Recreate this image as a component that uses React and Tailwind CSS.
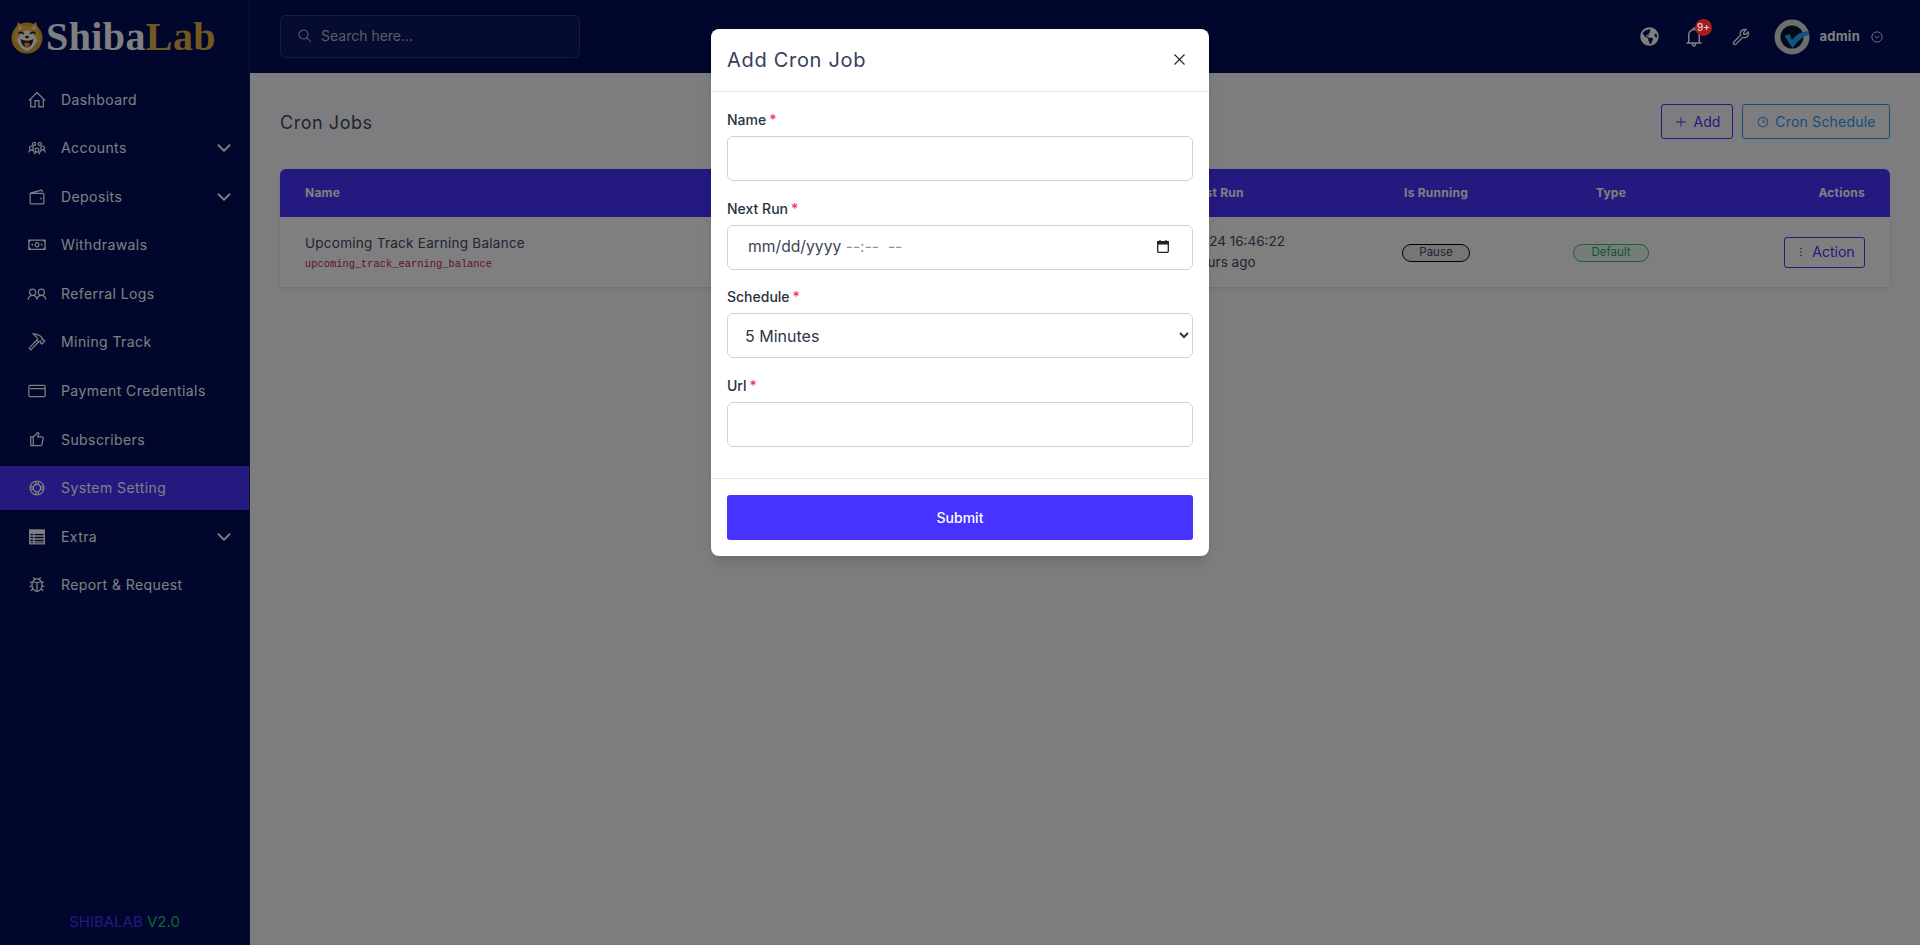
import React from 'react';
import {
  LiaHomeSolid, LiaUsersSolid, LiaWalletSolid, LiaMoneyBillSolid, LiaUserFriendsSolid, LiaHammerSolid,
  LiaCreditCard, LiaThumbsUp, LiaLifeRing, LiaBugSolid, LiaBell,
  LiaWrenchSolid, LiaSearchSolid, LiaPlusSolid, LiaClock, LiaEllipsisVSolid,
} from 'react-icons/lia';
import { FaGlobeAmericas } from 'react-icons/fa';
import { ChevronDown } from 'lucide-react';

function TableIcon({ className }) {
  return (
    <svg viewBox="0 0 16 16" width="16" height="16" fill="none" stroke="currentColor" strokeWidth="1.3" className={className}>
      <rect x="0.7" y="1.2" width="14.6" height="13.6" />
      <path d="M0.7 4 H15.3 M0.7 7 H15.3 M0.7 10 H15.3 M0.7 12.8 H15.3 M5 4 V14.8" />
      <rect x="0.7" y="1.2" width="14.6" height="2.8" fill="currentColor" />
    </svg>
  );
}

const navItems = [
  { label: 'Dashboard', icon: LiaHomeSolid },
  { label: 'Accounts', icon: LiaUsersSolid, caret: true },
  { label: 'Deposits', icon: LiaWalletSolid, caret: true },
  { label: 'Withdrawals', icon: LiaMoneyBillSolid },
  { label: 'Referral Logs', icon: LiaUserFriendsSolid },
  { label: 'Mining Track', icon: LiaHammerSolid },
  { label: 'Payment Credentials', icon: LiaCreditCard },
  { label: 'Subscribers', icon: LiaThumbsUp },
  { label: 'System Setting', icon: LiaLifeRing, active: true },
  { label: 'Extra', icon: TableIcon, caret: true },
  { label: 'Report & Request', icon: LiaBugSolid },
];

function ShibaLogo() {
  return (
    <svg width="34" height="34" viewBox="0 0 34 34" className="shrink-0">
      <circle cx="17" cy="18" r="15.5" fill="#d9a62e" />
      <path d="M5 13 L8 2 L13.5 6.5 H20.5 L26 2 L29 13 L30 21 L17 31 L4 21 Z" fill="#eeb94f" />
      <path d="M9 6 L8.6 10 L12 8 Z M25 6 L25.4 10 L22 8 Z" fill="#fff" />
      <path d="M17 10 Q24 13 27 20 Q24 29 17 31 Q10 29 7 20 Q10 13 17 10 Z" fill="#fff" />
      <path d="M8.5 13.5 Q11 11 14 14 M19.8 14 Q23 11 25.5 13.5" stroke="#2a1a10" strokeWidth="1.6" fill="none" />
      <ellipse cx="17" cy="17" rx="2" ry="1.3" fill="#2a1a10" />
      <path d="M10.5 19 Q17 22.5 23.5 19 Q22 27.5 17 27.5 Q12 27.5 10.5 19 Z" fill="#3a1a14" />
      <path d="M14 23.5 Q17 21.5 20 23.5 Q19.2 27.5 17 27.5 Q14.8 27.5 14 23.5 Z" fill="#f0913c" />
    </svg>
  );
}

function Avatar() {
  return (
    <svg width="36" height="36" viewBox="0 0 36 36" className="shrink-0">
      <circle cx="18" cy="18" r="14.5" fill="#05122e" stroke="#dcdcdc" strokeWidth="6" />
      <path d="M10.5 17 L15.5 15 L18 21 C22 16 27 12.5 35 12 L35 16 C29 17 24 22 18.5 29 Z" fill="#22a8ff" />
    </svg>
  );
}

function Field({ label, children }) {
  return (
    <div className="mb-[17.7px]">
      <label className="mb-[6px] block h-5 text-sm leading-5 font-medium text-[#2a3142]">
        {label}
        <span className="ml-[3px] text-[#f0345a]">*</span>
      </label>
      {children}
    </div>
  );
}

export default function App() {
  return (
    <div className="relative flex h-[945px] overflow-hidden bg-[#fafafe] font-['Inter',sans-serif] text-[#3d4a66]">
      <aside className="flex w-[250px] shrink-0 flex-col border-r border-white/10 bg-[#000c58]">
        <div className="flex h-[73px] items-center pl-[10px]">
          <ShibaLogo />
          <span className="ml-[2px] font-['Liberation_Serif',serif] text-[40px] leading-none font-bold tracking-[0.01em] text-white">
            Shiba<span className="text-[#e0b040]">Lab</span>
          </span>
        </div>
        <nav className="mt-1 flex flex-1 flex-col gap-[4.6px]">
          {navItems.map((item) => (
            <div
              key={item.label}
              className={`flex h-11 shrink-0 items-center pt-px pr-[14px] pl-[27px] text-sm tracking-[0.03em] text-white ${
                item.active ? 'bg-[#4733ff]' : ''
              }`}
            >
              <span className="mr-[14px] flex w-5 shrink-0 justify-center">
                <item.icon className="text-[20px]" />
              </span>
              <span className="flex-1">{item.label}</span>
              {item.caret && <ChevronDown size={22} strokeWidth={2} />}
            </div>
          ))}
        </nav>
        <div className="pb-[11px] text-center text-[15px] leading-6">
          <span className="text-[#4733ff]">SHIBALAB</span> <span className="text-[#28c76f]">V2.0</span>
        </div>
      </aside>

      <div className="flex min-w-0 flex-1 flex-col">
        <header className="flex h-[73px] shrink-0 items-center justify-between bg-[#000c58] pr-[37px] pl-[30px] text-white">
          <div className="flex h-[43px] w-[300px] items-center rounded-md border border-white/15 bg-white/5 pb-px pl-4 text-sm text-white/70">
            <LiaSearchSolid className="mr-2 -scale-x-100 text-[16px]" />
            Search here...
          </div>
          <div className="flex items-center">
            <FaGlobeAmericas className="text-[19px]" />
            <LiaBell className="ml-[23px] text-[24px]" />
            <LiaWrenchSolid className="ml-[24px] text-[22px]" />
            <span className="ml-[22px]">
              <Avatar />
            </span>
            <span className="ml-[9px] text-[13px] font-bold tracking-[0.02em]">admin</span>
            <svg width="12" height="12" viewBox="0 0 14 14" fill="none" stroke="currentColor" className="ml-[11px]">
              <circle cx="7" cy="7" r="6" />
              <path d="M4.4 5.8 L7 8.4 L9.6 5.8" />
            </svg>
          </div>
        </header>

        <main className="flex-1 px-[30px] pt-[31px]">
          <div className="flex h-[35px] items-center justify-between">
            <h1 className="pt-0.5 text-lg tracking-[0.03em]">Cron Jobs</h1>
            <div className="flex gap-[9px] text-sm">
              <button className="flex h-[35px] w-[72px] items-center justify-center rounded-[3px] border border-[#4733ff] text-[#4733ff]">
                <LiaPlusSolid className="mr-[6px] text-[14px]" />
                Add
              </button>
              <button className="flex h-[35px] w-[148px] items-center justify-center rounded-[3px] border border-[#2b9cf2] text-[#2b9cf2]">
                <LiaClock className="mr-[5px] text-[14px]" />
                <span className="tracking-[0.015em]">Cron Schedule</span>
              </button>
            </div>
          </div>

          <div className="mt-[30px] overflow-hidden rounded-t-md bg-white shadow-sm">
            <div className="grid h-12 grid-cols-[776.5px_267px_175px_175px_1fr] items-center bg-[#4733ff] px-[25px] text-xs font-bold tracking-[0.02em] text-white">
              <span>Name</span>
              <span className="pl-[5px] text-center">Last Run</span>
              <span className="text-center">Is Running</span>
              <span className="text-center">Type</span>
              <span className="text-right">Actions</span>
            </div>
            <div className="grid h-[70px] grid-cols-[776.5px_267px_175px_175px_1fr] items-center px-[25px]">
              <div>
                <div className="text-[13.5px] leading-5 tracking-[0.02em]">Upcoming Track Earning Balance</div>
                <div className="mt-[3px] font-['Liberation_Mono',monospace] text-[10.4px] leading-4 text-[#d0204f]">
                  upcoming_track_earning_balance
                </div>
              </div>
              <div className="pl-[5px] text-center text-[13.5px] leading-[21px] whitespace-nowrap">
                <div>2024-12-24 16:46:22</div>
                <div>2 hours ago</div>
              </div>
              <div className="flex justify-center pt-0.5">
                <span className="flex h-[18px] w-[68px] items-center justify-center rounded-full border border-black bg-[#ececec] text-[11.5px]">
                  Pause
                </span>
              </div>
              <div className="flex justify-center pt-0.5">
                <span className="flex h-[18px] w-[76px] items-center justify-center rounded-full border border-[#28c76f] bg-[#ecfaf2] text-[11.5px] text-[#28a765]">
                  Default
                </span>
              </div>
              <div className="flex justify-end">
                <button className="flex h-[31px] w-[81px] items-center justify-center rounded-[3px] border border-[#4733ff] text-sm text-[#4733ff]">
                  <LiaEllipsisVSolid className="mr-1 text-[14px]" />
                  Action
                </button>
              </div>
            </div>
          </div>
        </main>
      </div>

      {/* modal backdrop */}
      <div className="absolute inset-0 flex items-start justify-center bg-black/50 pt-[29px]">
        <div className="w-[498px] rounded-lg bg-white shadow-lg">
          <div className="flex h-[63px] items-center justify-between border-b border-[#e2e5ec] pr-[24px] pl-4">
            <h2 className="text-xl tracking-[0.035em] text-[#34405e]">Add Cron Job</h2>
            <svg width="11" height="11" viewBox="0 0 11 11" stroke="#222" strokeWidth="1.1" className="mb-0.5">
              <path d="M0.5 0.5 L10.5 10.5 M10.5 0.5 L0.5 10.5" />
            </svg>
          </div>
          <form className="px-4 pt-[18px]">
            <Field label="Name">
              <input type="text" className="block h-[45px] w-full rounded-md border border-[#ced1da] bg-white px-5" />
            </Field>
            <Field label="Next Run">
              <div className="flex h-[45px] w-full items-center justify-between rounded-md border border-[#ced1da] bg-white pr-[23px] pb-px pl-5 text-[15.7px] text-[#3d4558]">
                <span>
                  mm/dd/yyyy <span className="text-[#8b92a1]">--:-- &nbsp;--</span>
                </span>
                <svg width="12" height="13" viewBox="0 0 12 13" fill="none" stroke="#222" strokeWidth="1.3">
                  <rect x="0.7" y="1.7" width="10.6" height="10.6" rx="1" />
                  <rect x="0.7" y="1.7" width="10.6" height="2.2" fill="#222" />
                  <path d="M3 0 V2 M9 0 V2" />
                </svg>
              </div>
            </Field>
            <Field label="Schedule">
              <select className="block h-[45px] w-full rounded-md border border-[#ced1da] bg-white pl-[13px] text-base text-[#2d3648]">
                <option>5 Minutes</option>
              </select>
            </Field>
            <Field label="Url">
              <input type="text" className="block h-[45px] w-full rounded-md border border-[#ced1da] bg-white px-5" />
            </Field>
          </form>
          <div className="mt-[31px] border-t border-[#e2e5ec] px-4 py-4">
            <button className="block h-[45px] w-full rounded-[3px] bg-[#4733ff] text-sm font-medium text-white">Submit</button>
          </div>
        </div>
      </div>

      {/* notification badge keeps its colour above the backdrop */}
      <span className="absolute top-[19px] left-[1695px] flex h-[17px] w-[17px] items-center justify-center rounded-full bg-[#a81c1c] text-[10px] font-medium text-[#d8d8d8]">
        9+
      </span>
    </div>
  );
}
